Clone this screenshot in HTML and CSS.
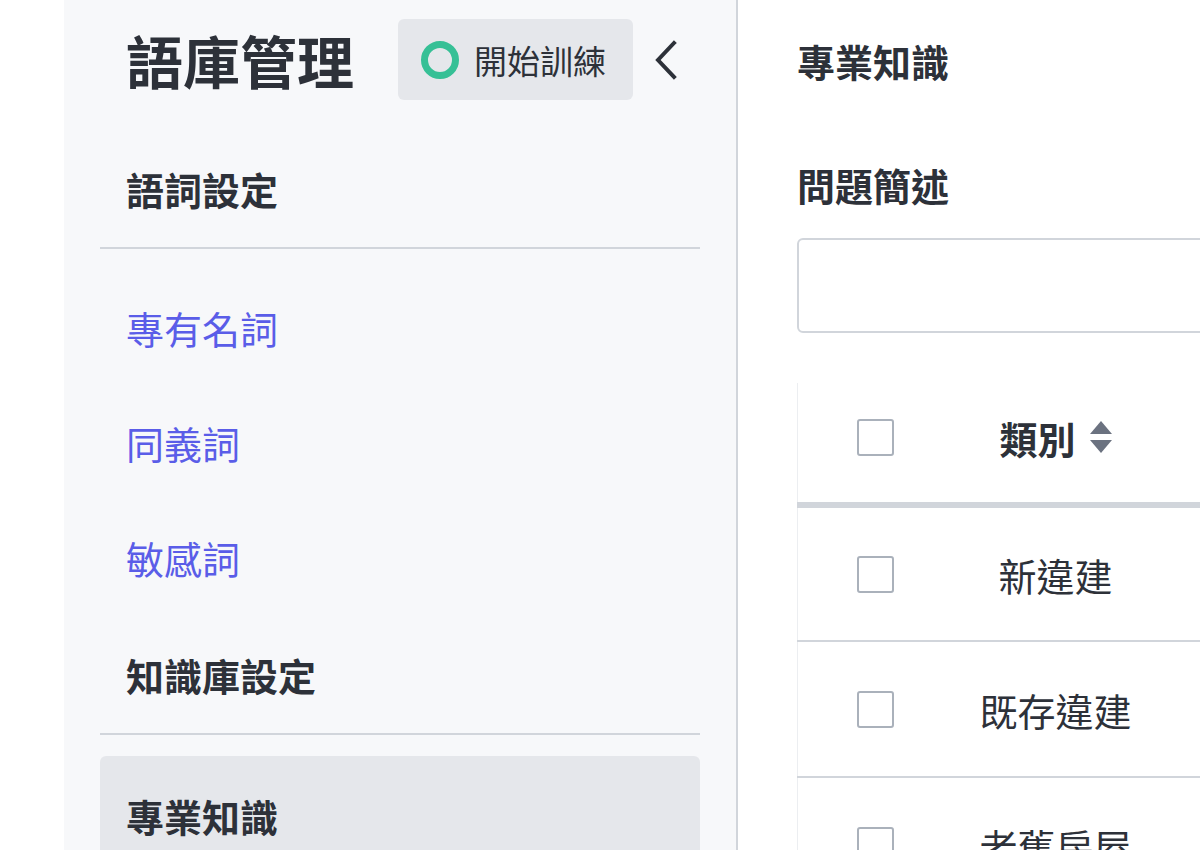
FILE: index.html
```html
<!DOCTYPE html>
<html lang="zh-Hant">
<head>
    <meta charset="UTF-8">
    <meta name="viewport" content="width=device-width, initial-scale=1.0">
    <title>語庫管理</title>
    <link rel="stylesheet" href="styles.css">
</head>
<body>
    <div class="layout">
        <aside class="sidebar">
            <div class="sidebar-header">
                <h1 class="sidebar-title">語庫管理</h1>
                <button class="train-button" type="button">
                    <span class="train-dot"></span>
                    <span>開始訓練</span>
                </button>
                <button class="collapse-button" type="button" aria-label="收合">
                    <svg width="24" height="40" viewBox="0 0 24 40">
                        <polyline points="19,3 3,20 19,37" fill="none" stroke="#2d3139" stroke-width="4" stroke-linecap="square"/>
                    </svg>
                </button>
            </div>

            <div class="nav-section">語詞設定</div>
            <ul class="nav-list">
                <li><a href="#" class="nav-link">專有名詞</a></li>
                <li><a href="#" class="nav-link">同義詞</a></li>
                <li><a href="#" class="nav-link">敏感詞</a></li>
            </ul>

            <div class="nav-section">知識庫設定</div>
            <ul class="nav-list">
                <li><a href="#" class="nav-link active">專業知識</a></li>
            </ul>
        </aside>

        <main class="content">
            <h2 class="page-title">專業知識</h2>

            <label class="field-label" for="summary">問題簡述</label>
            <input class="field-input" id="summary" type="text">

            <table class="data-table">
                <thead>
                    <tr>
                        <th class="col-check"><span class="checkbox"></span></th>
                        <th class="col-type">
                            <span class="sort-head">類別
                                <svg class="sort-icon" width="22" height="36" viewBox="0 0 22 36">
                                    <path d="M11 2 L22 15 L0 15 Z" fill="#6b7280"/>
                                    <path d="M0 21 L22 21 L11 34 Z" fill="#6b7280"/>
                                </svg>
                            </span>
                        </th>
                        <th class="col-rest"></th>
                    </tr>
                </thead>
                <tbody>
                    <tr>
                        <td class="col-check"><span class="checkbox"></span></td>
                        <td class="col-type">新違建</td>
                        <td></td>
                    </tr>
                    <tr>
                        <td class="col-check"><span class="checkbox"></span></td>
                        <td class="col-type">既存違建</td>
                        <td></td>
                    </tr>
                    <tr>
                        <td class="col-check"><span class="checkbox"></span></td>
                        <td class="col-type">老舊房屋</td>
                        <td></td>
                    </tr>
                </tbody>
            </table>
        </main>
    </div>
</body>
</html>
```

FILE: styles.css
```css
:root {
    --text-color: #2d3139;
    --sidebar-bg: #f7f8fa;
    --active-bg: #e5e7eb;
    --line-color: #d1d5db;
    --link-color: #5a5de8;
    --green: #36c096;
}

* {
    margin: 0;
    padding: 0;
    box-sizing: border-box;
}

body {
    font-family: "Noto Sans CJK TC", "Noto Sans", sans-serif;
    color: var(--text-color);
    background: #fff;
    height: 850px;
    overflow: hidden;
}

.layout {
    display: flex;
    height: 850px;
    padding-left: 64px;
}

/* sidebar */

.sidebar {
    width: 674px;
    flex-shrink: 0;
    background: var(--sidebar-bg);
    border-right: 2px solid var(--line-color);
    padding: 0 36px;
}

.sidebar-header {
    display: flex;
    align-items: center;
    padding: 19px 0 34px 26px;
}

.sidebar-title {
    font-size: 57px;
    font-weight: 700;
    line-height: 1;
    margin-right: 44px;
}

.train-button {
    display: flex;
    align-items: center;
    gap: 15px;
    height: 81px;
    padding: 0 27px 0 23px;
    border: none;
    border-radius: 6px;
    background: var(--active-bg);
    font-family: inherit;
    font-size: 33px;
    color: var(--text-color);
    cursor: pointer;
}

.train-dot {
    width: 38px;
    height: 38px;
    border-radius: 50%;
    border: 7px solid var(--green);
}

.collapse-button {
    display: flex;
    margin-left: 22px;
    border: none;
    background: transparent;
    cursor: pointer;
}

.nav-section {
    height: 115px;
    display: flex;
    align-items: center;
    padding-left: 26px;
    padding-bottom: 4px;
    font-size: 38px;
    font-weight: 700;
    border-bottom: 2px solid var(--line-color);
}

.nav-list {
    list-style: none;
    padding: 21px 0 5px;
}

.nav-link {
    display: flex;
    align-items: center;
    height: 115px;
    padding-left: 26px;
    font-size: 38px;
    color: var(--link-color);
    text-decoration: none;
    border-radius: 6px;
}

.nav-link.active {
    background: var(--active-bg);
    color: var(--text-color);
    font-weight: 700;
    height: 118px;
}

/* main content */

.content {
    flex: 1;
    padding-left: 59px;
    overflow: hidden;
}

.page-title {
    height: 120px;
    display: flex;
    align-items: center;
    font-size: 38px;
    font-weight: 700;
}

.field-label {
    display: block;
    font-size: 38px;
    font-weight: 700;
    line-height: 50px;
    margin: 40px 0 28px;
}

.field-input {
    display: block;
    width: 700px;
    height: 95px;
    border: 2px solid var(--line-color);
    border-radius: 6px;
    background: #fff;
}

.data-table {
    margin-top: 50px;
    width: 800px;
    border-collapse: collapse;
    border-left: 1px solid #eceef1;
    font-size: 38px;
}

.data-table th {
    height: 122px;
    padding-bottom: 11px;
    font-weight: 700;
    border-bottom: 6px solid var(--line-color);
}

.data-table td {
    height: 136px;
    font-weight: 400;
    border-bottom: 2px solid var(--line-color);
}

.col-check {
    width: 156px;
    text-align: center;
}

.col-type {
    width: 204px;
    text-align: center;
    white-space: nowrap;
}

.checkbox {
    display: block;
    width: 37px;
    height: 37px;
    margin: 0 auto;
    border: 2px solid #aab1bb;
    border-radius: 3px;
    background: #fff;
}

.sort-head {
    display: inline-flex;
    align-items: center;
    gap: 14px;
}
```
